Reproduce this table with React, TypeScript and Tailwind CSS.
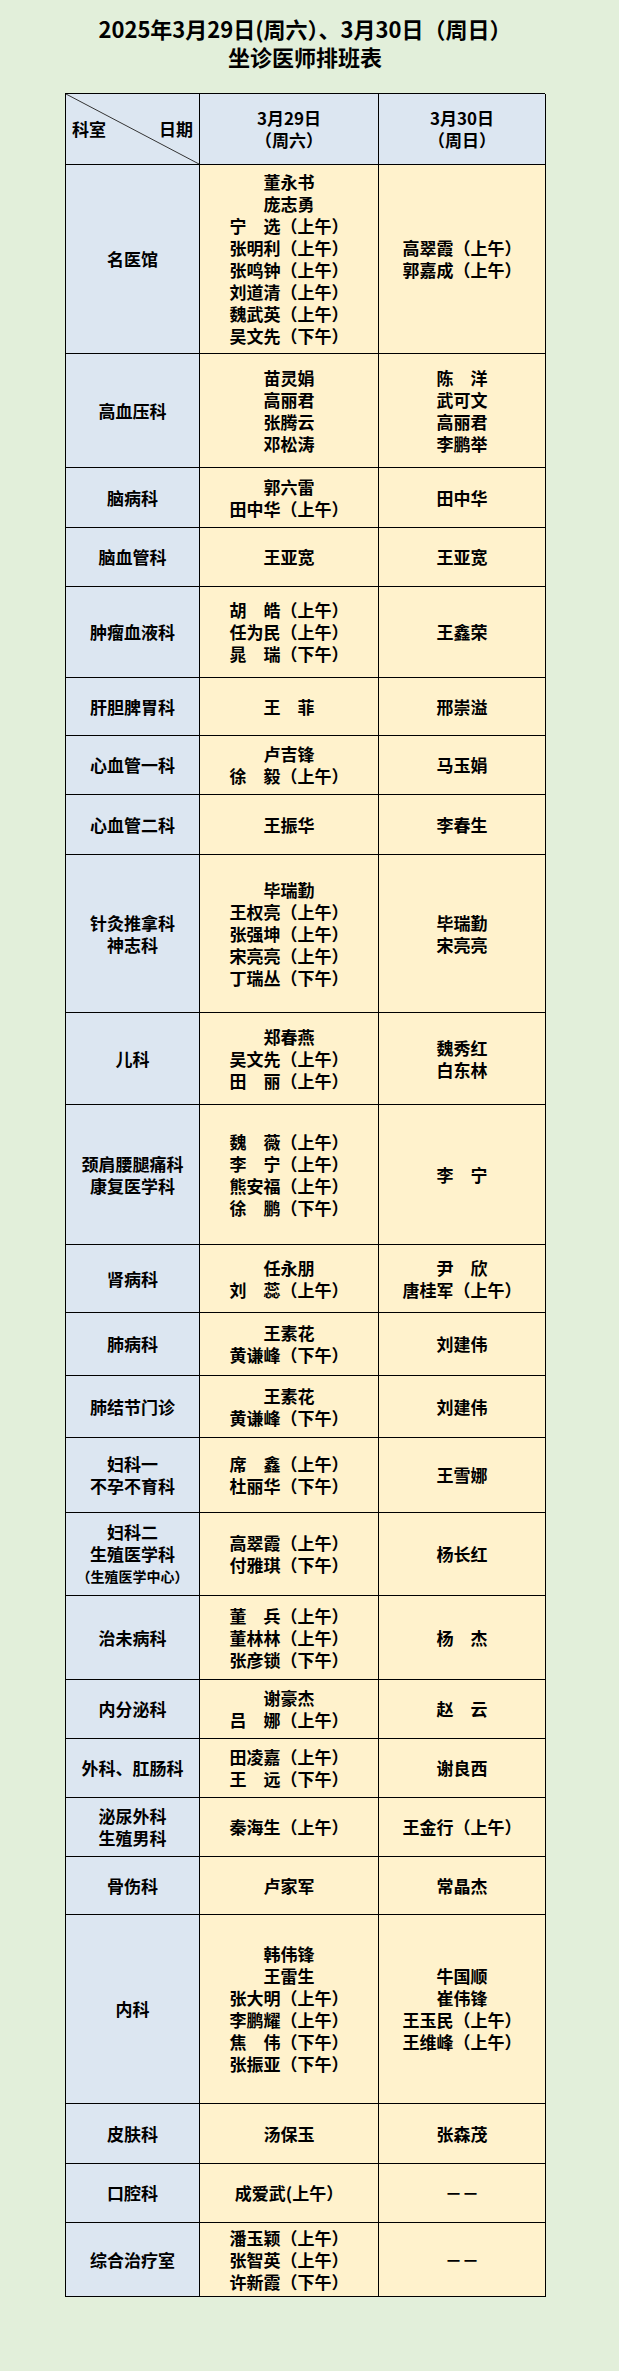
type Row = { dept: string[]; d1: string[]; d2: string[]; h: string; small?: string };

const rows: Row[] = [
  {
    dept: ['名医馆'],
    d1: ['董永书', '庞志勇', '宁　选（上午）', '张明利（上午）', '张鸣钟（上午）', '刘道清（上午）', '魏武英（上午）', '吴文先（下午）'],
    d2: ['高翠霞（上午）', '郭嘉成（上午）'],
    h: 'h-[189px]',
  },
  { dept: ['高血压科'], d1: ['苗灵娟', '高丽君', '张腾云', '邓松涛'], d2: ['陈　洋', '武可文', '高丽君', '李鹏举'], h: 'h-[114px]' },
  { dept: ['脑病科'], d1: ['郭六雷', '田中华（上午）'], d2: ['田中华'], h: 'h-[60px]' },
  { dept: ['脑血管科'], d1: ['王亚宽'], d2: ['王亚宽'], h: 'h-[59px]' },
  { dept: ['肿瘤血液科'], d1: ['胡　皓（上午）', '任为民（上午）', '晁　瑞（下午）'], d2: ['王鑫荣'], h: 'h-[91px]' },
  { dept: ['肝胆脾胃科'], d1: ['王　菲'], d2: ['邢崇溢'], h: 'h-[58px]' },
  { dept: ['心血管一科'], d1: ['卢吉锋', '徐　毅（上午）'], d2: ['马玉娟'], h: 'h-[59px]' },
  { dept: ['心血管二科'], d1: ['王振华'], d2: ['李春生'], h: 'h-[60px]' },
  {
    dept: ['针灸推拿科', '神志科'],
    d1: ['毕瑞勤', '王权亮（上午）', '张强坤（上午）', '宋亮亮（上午）', '丁瑞丛（下午）'],
    d2: ['毕瑞勤', '宋亮亮'],
    h: 'h-[158px]',
  },
  { dept: ['儿科'], d1: ['郑春燕', '吴文先（上午）', '田　丽（上午）'], d2: ['魏秀红', '白东林'], h: 'h-[92px]' },
  {
    dept: ['颈肩腰腿痛科', '康复医学科'],
    d1: ['魏　薇（上午）', '李　宁（上午）', '熊安福（上午）', '徐　鹏（下午）'],
    d2: ['李　宁'],
    h: 'h-[140px]',
  },
  { dept: ['肾病科'], d1: ['任永朋', '刘　蕊（上午）'], d2: ['尹　欣', '唐桂军（上午）'], h: 'h-[68px]' },
  { dept: ['肺病科'], d1: ['王素花', '黄谦峰（下午）'], d2: ['刘建伟'], h: 'h-[63px]' },
  { dept: ['肺结节门诊'], d1: ['王素花', '黄谦峰（下午）'], d2: ['刘建伟'], h: 'h-[62px]' },
  { dept: ['妇科一', '不孕不育科'], d1: ['席　鑫（上午）', '杜丽华（下午）'], d2: ['王雪娜'], h: 'h-[75px]' },
  {
    dept: ['妇科二', '生殖医学科'],
    small: '（生殖医学中心）',
    d1: ['高翠霞（上午）', '付雅琪（下午）'],
    d2: ['杨长红'],
    h: 'h-[83px]',
  },
  { dept: ['治未病科'], d1: ['董　兵（上午）', '董林林（上午）', '张彦锁（下午）'], d2: ['杨　杰'], h: 'h-[84px]' },
  { dept: ['内分泌科'], d1: ['谢豪杰', '吕　娜（上午）'], d2: ['赵　云'], h: 'h-[59px]' },
  { dept: ['外科、肛肠科'], d1: ['田凌嘉（上午）', '王　远（下午）'], d2: ['谢良西'], h: 'h-[59px]' },
  { dept: ['泌尿外科', '生殖男科'], d1: ['秦海生（上午）'], d2: ['王金行（上午）'], h: 'h-[59px]' },
  { dept: ['骨伤科'], d1: ['卢家军'], d2: ['常晶杰'], h: 'h-[58px]' },
  {
    dept: ['内科'],
    d1: ['韩伟锋', '王雷生', '张大明（上午）', '李鹏耀（上午）', '焦　伟（下午）', '张振亚（下午）'],
    d2: ['牛国顺', '崔伟锋', '王玉民（上午）', '王维峰（上午）'],
    h: 'h-[189px]',
  },
  { dept: ['皮肤科'], d1: ['汤保玉'], d2: ['张森茂'], h: 'h-[60px]' },
  { dept: ['口腔科'], d1: ['成爱武(上午）'], d2: ['－－'], h: 'h-[59px]' },
  { dept: ['综合治疗室'], d1: ['潘玉颖（上午）', '张智英（上午）', '许新霞（下午）'], d2: ['－－'], h: 'h-[74px]' },
];

function Lines({ items }: { items: string[] }) {
  return (
    <>
      {items.map((t, i) => (
        <div key={i} className="whitespace-pre">
          {t}
        </div>
      ))}
    </>
  );
}

export default function App() {
  return (
    <div className="min-h-[2371px] w-[619px] bg-[#e2efda] font-['Noto_Sans_CJK_SC',sans-serif] text-black">
      <div className="ml-[65px] w-[480px] pt-[14px]">
        <div className="mb-[23px] text-center text-[22px] font-bold leading-[28px]">
          <div>2025年3月29日(周六）、3月30日（周日）</div>
          <div>坐诊医师排班表</div>
        </div>

        <div className="border-l border-t border-black text-[17px] font-bold leading-[22px]">
          <div className="grid h-[71px] grid-cols-[134px_179px_167px]">
            <div className="relative flex items-center justify-between border-b border-r border-black bg-[#dce6f1] px-[6px]">
              <svg className="absolute inset-0 h-full w-full" viewBox="0 0 100 100" preserveAspectRatio="none">
                <line x1="0" y1="0" x2="100" y2="100" stroke="#333" strokeWidth="1" vectorEffect="non-scaling-stroke" />
              </svg>
              <span className="relative">科室</span>
              <span className="relative">日期</span>
            </div>
            <div className="flex flex-col items-center justify-center border-b border-r border-black bg-[#dce6f1] text-center">
              <div>3月29日</div>
              <div>（周六）</div>
            </div>
            <div className="flex flex-col items-center justify-center border-b border-r border-black bg-[#dce6f1] text-center">
              <div>3月30日</div>
              <div>（周日）</div>
            </div>
          </div>

          {rows.map((r, i) => (
            <div key={i} className={`grid grid-cols-[134px_179px_167px] ${r.h}`}>
              <div className="flex flex-col items-center justify-center border-b border-r border-black bg-[#dce6f1] text-center">
                <Lines items={r.dept} />
                {r.small && <div className="text-[14px] leading-[22px]">{r.small}</div>}
              </div>
              <div className="flex flex-col items-center justify-center border-b border-r border-black bg-[#fff2cc] text-center">
                <Lines items={r.d1} />
              </div>
              <div className="flex flex-col items-center justify-center border-b border-r border-black bg-[#fff2cc] text-center">
                <Lines items={r.d2} />
              </div>
            </div>
          ))}
        </div>
      </div>
    </div>
  );
}
